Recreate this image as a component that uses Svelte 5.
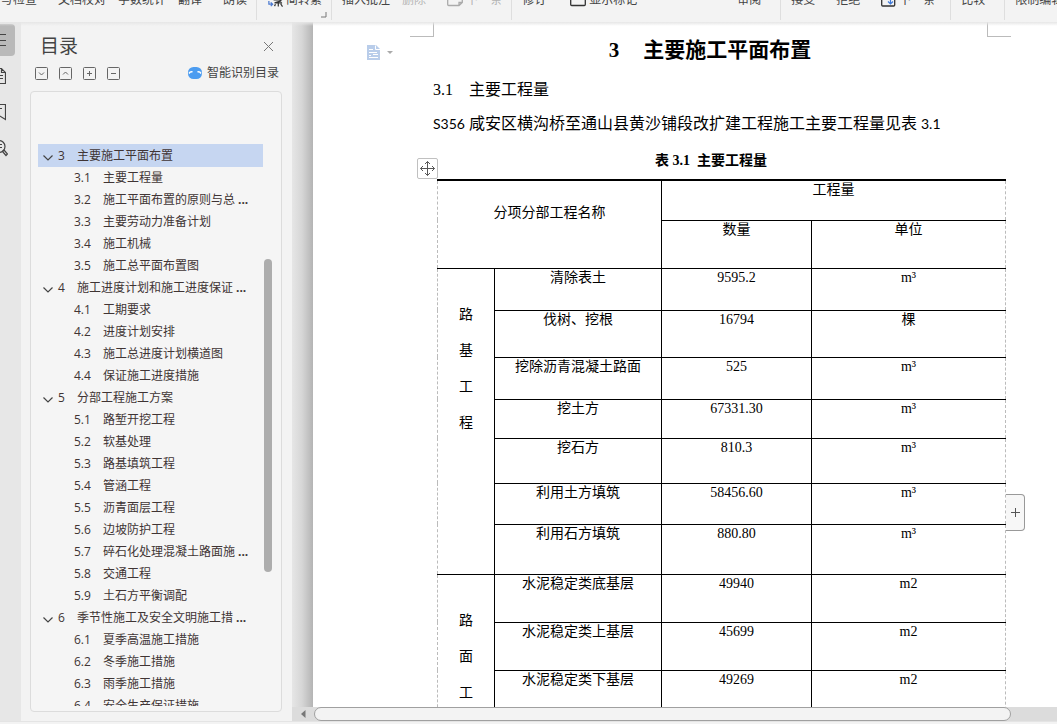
<script>
  const ribbon = [
    { cls: 'first', items: [
      { text: '拼写检查' }, { text: '文档校对', gap: 'g20' }, { text: '字数统计', gap: 'g12' },
      { text: '翻译', gap: 'g12' }, { text: '朗读', gap: 'g20' }
    ] },
    { items: [{ text: '简转繁', icon: 'convert' }], launcher: true },
    { items: [
      { text: '插入批注' }, { text: '删除', gap: 'g12', off: true },
      { text: '下一条', gap: 'g20', icon: 'note', off: true }
    ] },
    { cls: 'wide', items: [
      { text: '修订' }, { text: '显示标记', gap: 'g24', icon: 'box' }, { text: '审阅', gap: 'g100' }
    ] },
    { cls: 'accept', items: [
      { text: '接受' }, { text: '拒绝', gap: 'g20' }, { text: '下一条', gap: 'g20', icon: 'next' }
    ] },
    { cls: 'wide', items: [{ text: '比较' }] },
    { cls: 'last', items: [{ text: '限制编辑' }] }
  ];

  const outline = [
    [1, '3', '主要施工平面布置'], [2, '3.1', '主要工程量'],
    [2, '3.2', '施工平面布置的原则与总', true], [2, '3.3', '主要劳动力准备计划'],
    [2, '3.4', '施工机械'], [2, '3.5', '施工总平面布置图'],
    [1, '4', '施工进度计划和施工进度保证', true], [2, '4.1', '工期要求'],
    [2, '4.2', '进度计划安排'], [2, '4.3', '施工总进度计划横道图'],
    [2, '4.4', '保证施工进度措施'], [1, '5', '分部工程施工方案'],
    [2, '5.1', '路堑开挖工程'], [2, '5.2', '软基处理'], [2, '5.3', '路基填筑工程'],
    [2, '5.4', '管涵工程'], [2, '5.5', '沥青面层工程'], [2, '5.6', '边坡防护工程'],
    [2, '5.7', '碎石化处理混凝土路面施', true], [2, '5.8', '交通工程'],
    [2, '5.9', '土石方平衡调配'], [1, '6', '季节性施工及安全文明施工措', true],
    [2, '6.1', '夏季高温施工措施'], [2, '6.2', '冬季施工措施'],
    [2, '6.3', '雨季施工措施'], [2, '6.4', '安全生产保证措施']
  ];

  const sections = [
    { name: ['路', '基', '工', '程'], rows: [
      ['清除表土', '9595.2', 'm³', 42], ['伐树、挖根', '16794', '棵', 47],
      ['挖除沥青混凝土路面', '525', 'm³', 42], ['挖土方', '67331.30', 'm³', 39],
      ['挖石方', '810.3', 'm³', 45], ['利用土方填筑', '58456.60', 'm³', 41],
      ['利用石方填筑', '880.80', 'm³', 50]
    ] },
    { name: ['路', '面', '工', '程'], rows: [
      ['水泥稳定类底基层', '49940', 'm2', 48], ['水泥稳定类上基层', '45699', 'm2', 48],
      ['水泥稳定类下基层', '49269', 'm2', 96]
    ] }
  ];

  const tools = [
    { label: '展开', d: 'M4 5.5 6.5 8 9 5.5' },
    { label: '收缩', d: 'M4 7.5 6.5 5 9 7.5' },
    { label: '增加', d: 'M4 6.5H9M6.5 4V9' },
    { label: '减少', d: 'M4 6.5H9' }
  ];
</script>

<div class="app">
  <header class="ribbon">
    {#each ribbon as group}
      <div class="group {group.cls ?? ''}">
        {#each group.items as item}
          <button class="cmd {item.gap ?? ''}" disabled={item.off}>
            {#if item.icon === 'convert'}
              <svg width="16" height="16" viewBox="0 0 17 16" fill="none"><path d="M2 9v3.500h3.500M4 10.500l2 2-2 2" stroke="#4a78d0" stroke-width="1.300"/><path d="M7 8h9M8 11l7-2M8 11h8M12 11v4M9 12.500l-1 2M14.500 12l2 3" stroke="#333" stroke-width="1.300"/></svg>
            {:else if item.icon === 'note'}
              <svg width="16" height="16" viewBox="0 0 16 16" fill="none"><path d="M.7 2v10.500a1 1 0 0 0 1 1H12l3.300-3V2M12 13.500v-3h3.300" stroke="#aaa" stroke-width="1.300"/></svg>
            {:else if item.icon === 'box'}
              <svg width="16" height="16" viewBox="0 0 16 16" fill="none"><path d="M.7 2v10.500a1 1 0 0 0 1 1h12.600a1 1 0 0 0 1-1V2" stroke="#333" stroke-width="1.300"/></svg>
            {:else if item.icon === 'next'}
              <svg width="15" height="16" viewBox="0 0 15 16" fill="none"><path d="M.7 2v11a1 1 0 0 0 1 1h11a1 1 0 0 0 1-1V2" stroke="#333" stroke-width="1.300"/><path d="M9.500 5v7M7 9.500l2.500 2.500L12 9.500" stroke="#3d78d8" stroke-width="1.200"/></svg>
            {/if}
            {item.text}
          </button>
        {/each}
        {#if group.launcher}
          <svg class="launcher" width="6" height="6" viewBox="0 0 6 6" fill="none"><path d="M5 0v5H0" stroke="#777"/></svg>
        {/if}
      </div>
    {/each}
  </header>

  <main class="work">
    <nav class="rail" aria-label="导航">
      <button class="active" aria-label="目录"><svg width="16" height="18" viewBox="0 0 16 18"><path d="M0 3.500h16M0 9.500h16M0 14.500h16"/></svg></button>
      <button aria-label="章节"><svg width="16" height="18" viewBox="0 0 16 18"><path d="M1 1.500h10.500l4 4v11H1zM11.500 1.500v4h4M5 8.500h8M5 11.500h8"/></svg></button>
      <button aria-label="书签"><svg width="16" height="18" viewBox="0 0 16 18"><path d="M2 1.500h13.500v15L9 12.500l-6 4M6 5.500h6"/></svg></button>
      <button aria-label="查找"><svg width="18" height="18" viewBox="0 0 18 18"><circle cx="9" cy="7.500" r="6"/><path d="M8 5.500h4M8 8.500h4M12.500 12.500l1.500-1.500 3.500 4-1.500 1.500z"/></svg></button>
    </nav>

    <aside class="panel">
      <div class="title">
        <h2>目录</h2>
        <button class="plain" aria-label="关闭"><svg width="11" height="11" viewBox="0 0 11 11"><path d="M1 1l9 9M10 1l-9 9" stroke="#777" fill="none"/></svg></button>
      </div>
      <div class="tools">
        {#each tools as tool}
          <button class="plain" aria-label={tool.label}>
            <svg width="13" height="13" viewBox="0 0 13 13" fill="none" stroke="#666"><rect x=".5" y=".5" width="12" height="12" rx="1"/><path d={tool.d}/></svg>
          </button>
        {/each}
        <button class="plain smart">
          <svg width="14" height="12" viewBox="0 0 14 12"><rect width="14" height="12" rx="5.500" fill="#4c9cf0"/><path d="M1 6.500q1.500-2.500 3.500-1.500M9.500 5q2-1 3.500 1.500" stroke="#fff" stroke-width="1.500" fill="none"/></svg>
          智能识别目录
        </button>
      </div>
      <div class="frame">
        <ul class="tree">
          {#each outline as [level, number, text, cut], i}
            <li>
              <a href="#section" class="level{level}" class:current={i === 0}>
                {#if level === 1}<svg width="10" height="6" viewBox="0 0 10 6"><path d="M.5.5 5 5 9.500.5" fill="none" stroke="#444" stroke-width="1.200"/></svg>{/if}
                <span class="number">{number}</span><span>{text}</span>{#if cut}<b>...</b>{/if}
              </a>
            </li>
          {/each}
        </ul>
        <div class="track"><span class="before"></span><span class="thumb"></span><span class="after"></span></div>
      </div>
    </aside>

    <section class="canvas">
      <div class="view">
        <article class="page">
          <span class="corner left"></span>
          <span class="corner right"></span>
          <button class="plain doc" aria-label="段落布局">
            <svg width="26" height="16" viewBox="0 0 26 16"><path d="M0 0h9l4 4v11H0z" fill="#b9cdea"/><path d="M8.500.5v4H13M2 4.500h4M2 7.500h8M2 10.500h2M6 9.500h5M2 12.500h9" stroke="#fff" fill="none"/><path d="M20 6h6l-3 3z" fill="#aaa"/></svg>
          </button>
          <h1><span>3</span>主要施工平面布置</h1>
          <h3><span>3.1</span>主要工程量</h3>
          <p><span class="latin">S356</span> 咸安区横沟桥至通山县黄沙铺段改扩建工程施工主要工程量见表 <span class="latin">3.1</span></p>
          <div class="sheet">
            <table>
              <caption>表 3.1&nbsp; 主要工程量</caption>
              <colgroup><col class="c1" /><col class="c2" /><col class="c3" /><col /></colgroup>
              <thead>
                <tr class="h1"><th colspan="2" rowspan="2" class="name">分项分部工程名称</th><th colspan="2">工程量</th></tr>
                <tr class="h2"><th>数量</th><th>单位</th></tr>
              </thead>
              <tbody>
                {#each sections as section}
                  {#each section.rows as [name, amount, unit, height], i}
                    <tr style="height: {height}px">
                      {#if i === 0}
                        <th rowspan={section.rows.length} class="side">{#each section.name as char}<div>{char}</div>{/each}</th>
                      {/if}
                      <td>{name}</td><td>{amount}</td><td>{unit}</td>
                    </tr>
                  {/each}
                {/each}
              </tbody>
            </table>
            <button class="plain move" aria-label="移动表格">
              <svg width="15" height="15" viewBox="0 0 15 15" fill="none" stroke="#555"><path d="M7.500.5v14M.5 7.500h14M5 3 7.500.5 10 3M5 12l2.500 2.500L10 12M3 5 .5 7.500 3 10M12 5l2.500 2.500L12 10"/></svg>
            </button>
            <button class="plain add" aria-label="添加列">
              <svg width="9" height="9" viewBox="0 0 9 9"><path d="M0 4.500h9M4.500 0v9" stroke="#555"/></svg>
            </button>
          </div>
        </article>
      </div>
      <div class="hbar">
        <svg width="5" height="8" viewBox="0 0 5 8"><path d="M4.500 0v8L0 4z" fill="#777"/></svg>
        <span class="hthumb"></span>
      </div>
    </section>
  </main>
  <footer></footer>
</div>

<style>
  :global(body) { margin: 0; }
  .app {
    height: 100vh; display: flex; flex-direction: column; overflow: hidden;
    background: #f3f3f3; color: #444;
    font: 12px/16px "Open Sans", "Noto Sans CJK SC", sans-serif;
  }
  button { font: inherit; color: inherit; border: 0; background: none; padding: 0; white-space: nowrap; flex: none; }
  .plain { display: flex; align-items: center; justify-content: center; }
  svg { display: block; flex: none; }

  .ribbon {
    height: 22px; flex: none; display: flex; overflow: hidden; background: #f3f3f3;
  }
  .group { display: flex; align-items: flex-start; padding: 0 9px 0 10px; border-right: 1px solid #dedede; height: 20px; flex: none; position: relative; }
  .group.first { margin-left: -21px; }
  .group.wide { padding-right: 19px; }
  .group.accept { padding-right: 15px; }
  .group.last { border: 0; }
  .cmd { display: flex; gap: 3px; margin-top: -8px; color: #444; }
  .cmd:disabled { color: #b4b4b4; }
  .g12 { margin-left: 12px; }
  .g20 { margin-left: 21px; }
  .g24 { margin-left: 24px; }
  .g100 { margin-left: 100px; }
  .launcher { position: absolute; right: 4px; bottom: 2px; }

  .work { flex: 1; min-height: 0; display: flex; position: relative; }
  .work::before {
    content: ""; position: absolute; z-index: 2; top: 0; left: 0; right: 0; height: 4px;
    background: linear-gradient(#e6e6e6, #f3f3f300);
  }
  .rail { width: 21px; flex: none; background: #e7e7e7; padding-top: 2px; display: flex; flex-direction: column; gap: 4px; overflow: hidden; }
  .rail button { width: 25px; height: 32px; margin-left: -10px; display: flex; align-items: center; }
  .rail .active { background: #b9b9b9; border-radius: 4px; }
  .rail svg { fill: none; stroke: #444; stroke-width: 1.2; }

  .panel { width: 271px; flex: none; background: #f3f3f3; display: flex; flex-direction: column; box-sizing: border-box; padding: 12px 10px 9px 9px; }
  .title { display: flex; justify-content: space-between; align-items: center; height: 24px; padding: 0 8px 0 10px; }
  h2 { margin: 0; font-size: 19px; line-height: 24px; font-weight: 400; }
  .tools { display: flex; align-items: center; gap: 11px; padding: 0 3px 0 5px; height: 30px; }
  .smart { margin-left: auto; gap: 5px; }
  .frame { flex: 1; min-height: 0; display: flex; border: 1px solid #dcdcdc; border-radius: 4px; background: #f5f5f5; margin-top: 3px; padding: 5px 9px 5px 7px; }
  .tree { flex: 1; list-style: none; margin: 0; padding: 47px 0 0; overflow: hidden; color: #403434; }
  .tree a { display: flex; align-items: center; height: 22px; color: inherit; text-decoration: none; white-space: nowrap; line-height: 22px; }
  .tree svg { margin: 4px 5px 0 0; }
  .tree b { margin-left: 3px; }
  .level1 { padding-left: 5px; }
  .level2 { padding-left: 36px; }
  .level1 .number { width: 19px; }
  .level2 .number { width: 29px; }
  .tree .current { background: #c6d6f1; height: 23px; }
  .track { width: 8px; display: flex; flex-direction: column; margin-left: 1px; }
  .before { flex: 162; }
  .thumb { flex: 314; background: #adadad; border-radius: 4px; }
  .after { flex: 134; }

  .canvas { flex: 1; min-width: 0; display: flex; flex-direction: column; }
  .view { flex: 1; min-height: 0; overflow: hidden; display: flex; padding-left: 21px; background: linear-gradient(90deg, #e6e6e6, #d6d6d6 10px, #b4b4b4 21px); }
  .page {
    flex: 1; min-width: 0; position: relative; background: #fff; color: #000; padding: 12px 70px 0 120px;
    font-family: "Liberation Serif", "Noto Sans CJK SC", serif;
  }
  .corner { position: absolute; top: 0; width: 23px; height: 14px; border-bottom: 1px solid #bbb; }
  .corner.left { left: 97px; border-right: 1px solid #bbb; }
  .corner.right { right: 46px; border-left: 1px solid #bbb; }
  .doc { position: absolute; left: 54px; top: 23px; }
  h1 { margin: 0; font-size: 21px; line-height: 32px; text-align: center; white-space: nowrap; }
  h1 span { margin-right: 24px; }
  h3 { margin: 8px 0 0; font-size: 16px; line-height: 32px; font-weight: 400; }
  h3 span { margin-right: 16px; }
  p { margin: 2px 0 0; font-size: 16px; line-height: 32px; white-space: nowrap; }
  .latin { font: 400 14px "Lato", sans-serif; }
  .sheet { position: relative; margin: 10px -19px 0 4px; }
  table { width: 100%; table-layout: fixed; border-collapse: collapse; font-size: 14px; line-height: 18px; border-left: 1px dashed #bbb; border-right: 1px dashed #bbb; }
  caption { font-weight: 700; line-height: 20px; padding: 1px 21px 8px 0; }
  .c1 { width: 57px; }
  .c2 { width: 167px; }
  .c3 { width: 150px; }
  th, td { box-sizing: border-box; border: 1px solid #000; padding: 0; vertical-align: top; font-weight: 400; text-align: center; }
  th:first-child, td:first-child { border-left-style: none; }
  tbody td:nth-last-child(3) { border-left: 1px solid #000; }
  th:last-child, td:last-child { border-right-style: none; }
  .name { border-right: 1px solid #000; padding-top: 23px; }
  .side { padding-top: 28px; line-height: 36px; border-right: 1px solid #000; }
  .h1 { height: 40px; }
  .h1 th { border-top: 2px solid #000; }
  .h2 { height: 48px; }
  .move { position: absolute; left: -20px; top: 8px; width: 21px; height: 21px; box-sizing: border-box; border: 1px solid #c0c0c0; border-radius: 2px; background: #fff; }
  .add { position: absolute; left: 100%; top: 344px; width: 19px; height: 37px; box-sizing: border-box; border: 1px solid #999; border-left: 0; border-radius: 0 4px 4px 0; background: #f7f7f7; }

  .hbar { height: 14px; flex: none; display: flex; align-items: center; background: #dcdcdc; padding: 0 46px 0 9px; gap: 8px; }
  .hthumb { flex: 1; height: 14px; box-sizing: border-box; border: 1px solid #a0a0a0; border-radius: 7px; background: #f3f3f3; }
  footer { height: 3px; flex: none; background: #f3f3f3; box-sizing: border-box; border-top: 1px solid #e4e4e4; }
</style>
